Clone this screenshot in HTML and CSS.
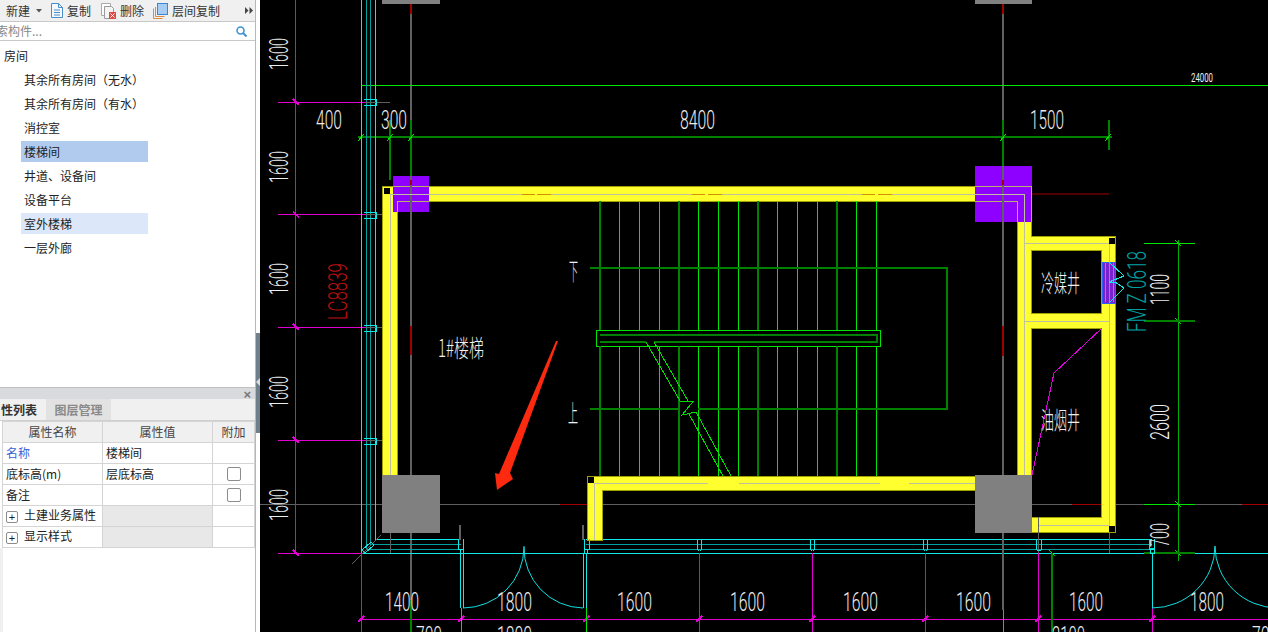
FILE: index.html
```html
<!DOCTYPE html>
<html lang="zh">
<head>
<meta charset="utf-8">
<title>房间</title>
<link rel="stylesheet" href="styles.css">
</head>
<body>
<div class="app">
  <aside class="sidebar">
    <div class="toolbar">
      <span class="tool new">新建</span>
      <svg class="caret" width="6" height="4" viewBox="0 0 6 4"><path d="M0 0h6L3 3.500z" fill="#555"/></svg>
      <span class="tool">
        <svg width="12" height="15" viewBox="0 0 12 15"><path d="M.5.500h7l4 4v10H.500z" fill="#f4f9fe" stroke="#4a8cc8"/><path d="M7.500.500v4h4M3 7h6M3 9.500h6M3 12h6" fill="none" stroke="#4a8cc8"/></svg>
        复制
      </span>
      <span class="tool">
        <svg width="16" height="16" viewBox="0 0 16 16"><path d="M.5.500h9v12H.500z" fill="#fff" stroke="#aaa"/><path d="M3.500 3.500h7l2 2v10h-9z" fill="#f4f4f4" stroke="#999"/><rect x="8" y="9" width="7" height="7" fill="#e04a40"/><path d="M9.500 10.500l4 4M13.500 10.500l-4 4" stroke="#fff"/></svg>
        删除
      </span>
      <span class="tool">
        <svg width="15" height="16" viewBox="0 0 15 16"><path d="M.5 5.500v10h9" fill="none" stroke="#e08a40"/><path d="M2.500 4v9.500h9" fill="none" stroke="#e08a40"/><rect x="4.500" y=".5" width="10" height="11" fill="#a8cdf5" stroke="#3f86d0"/></svg>
        层间复制
      </span>
      <svg class="more" width="8" height="7" viewBox="0 0 8 7"><path d="M0 0l3.500 3.500L0 7zM4.500 0L8 3.500 4.500 7z" fill="#444"/></svg>
    </div>
    <div class="search">
      <span class="search-text">索构件...</span>
      <svg width="11" height="11" viewBox="0 0 11 11"><circle cx="4.500" cy="4.500" r="3.500" fill="none" stroke="#3f93d2" stroke-width="1.600"/><path d="M7 7l3.500 3.500" stroke="#3f93d2" stroke-width="2"/></svg>
    </div>
    <ul class="tree">
      <li class="root">房间</li>
      <li>其余所有房间（无水）</li>
      <li>其余所有房间（有水）</li>
      <li>消控室</li>
      <li class="selected">楼梯间</li>
      <li>井道、设备间</li>
      <li>设备平台</li>
      <li class="hover">室外楼梯</li>
      <li>一层外廊</li>
    </ul>
    <section class="props">
      <div class="props-head"><span class="close">×</span></div>
      <div class="tabs">
        <span class="tab active">性列表</span>
        <span class="tab">图层管理</span>
      </div>
      <table class="grid">
        <colgroup><col class="c1"><col class="c2"><col class="c3"></colgroup>
        <tr><th>属性名称</th><th>属性值</th><th>附加</th></tr>
        <tr><td class="link">名称</td><td>楼梯间</td><td></td></tr>
        <tr><td>底标高(m)</td><td>层底标高</td><td class="chk"><span class="box"></span></td></tr>
        <tr><td>备注</td><td></td><td class="chk"><span class="box"></span></td></tr>
        <tr><td><span class="plus">+</span>土建业务属性</td><td class="off"></td><td></td></tr>
        <tr><td><span class="plus">+</span>显示样式</td><td class="off"></td><td></td></tr>
      </table>
      <div class="strip"></div>
    </section>
  </aside>
  <div class="splitter"><span class="handle"></span></div>
  <svg class="cad" viewBox="260 0 1008 632" width="1008" height="632">
    <!-- axis lines -->
    <path class="axis" d="M411 4V600M1003 4V610M260 504.500H1268"/>
    <path class="axisred" d="M411 4V14M411 326V355M1003 4V14M1003 326V356M560 504.500H590M1072 504.500H1102M1242 504.500H1268"/>
    <path class="wine" d="M1032 194H1109"/>
    <rect class="pillar" x="382" y="-2" width="58" height="6"/>
    <rect class="pillar" x="975" y="-2" width="57" height="6"/>

    <!-- top dimensions -->
    <path class="bright" d="M361 85.500H1268M361.500 78V440"/>
    <path class="dark" d="M358 137H1112M390 120V180M411 120V178M1003 120V166M1109 120V150"/>
    <path class="mid" d="M1178 240V561"/>
    <path class="bright" d="M358 141l6-7M387 141l6-7M408 141l6-7M1000 141l6-7M1105 141l6-7"/>

    <!-- magenta left axis -->
    <path class="mag" d="M295.500 0V553M278 102.500H365M278 214.500H365M278 327.500H365M278 440.500H365M278 553.500H361"/>
    <path class="mag" d="M293 99l6 6M293 211.500l6 6M293 324l6 6M293 437l6 6M293 550l6 6"/>

    <!-- curtain wall left -->
    <path class="cyan" d="M361.500 0V553.500H1268M375.500 0V539.500H461M586 539.500H1152"/>
    <path class="teal" d="M366.500 0V549.500H461M370.500 0V544.500H461M586 544.500H1152M586 549.500H1152"/>
    <path class="axis thin" d="M352 564L381 535M365 102.500H390M365 214.500H390M365 327.500H390M365 440.500H390M390.500 533V553"/>
    <path class="cyan" d="M364 99.500h12v6h-12M364 212.500h12v6h-12M364 325.500h12v6h-12M364 438.500h12v6h-12"/>
    <path class="cyan" d="M362 550l9-8 3 3-9 8z"/>

    <!-- walls -->
    <path class="wall" d="M382.500 186.500H1031.500V236.500H1115.500V532.500H1031.500V517.500H1101.500V328.500H1031.500V475H1017.500V201.500H397.500V476H382.500Z"/>
    <path class="room" d="M1031.500 250.500H1101.500V313.500H1031.500Z"/>
    <path class="wall" d="M587.500 476.500H975V490.500H602.500V540H587.500Z"/>

    <!-- columns on top of walls -->
    <rect class="purple" x="393" y="176" width="36" height="36"/>
    <rect class="purple" x="975" y="166" width="57" height="56"/>
    <path class="tan" d="M393 186.500H429M397.500 212V201.500H429M975 186.500H1032M975 201.500H1017.500V222M1031.500 186.500V222"/>
    <path class="axis" d="M411 176V212M1003 166V222"/>
    <path class="axisred" d="M411 180V185M1003 180V185"/>

    <!-- wall centre lines -->
    <path class="core" d="M390.500 194V476M390.500 194.500H522M551 194.500H692M722 194.500H862M892 194.500H1024.500V475M1024.500 243.500H1109.500V262M1109.500 303V525M1024.500 321.500H1109.500M1039 525.500H1109.500M594 483.500H708M739 483.500H880M909 483.500H975M594.500 483V540"/>
    <path class="dashorange" d="M522 194.500H535M537 194.500H551M692 194.500H705M708 194.500H722M862 194.500H875M878 194.500H892"/>
    <rect class="hole" x="384" y="188" width="6" height="6"/>
    <rect class="hole" x="588" y="477" width="6" height="6"/>
    <rect class="hole" x="1109" y="238" width="6" height="6"/>
    <rect class="hole" x="1109" y="526" width="6" height="6"/>

    <!-- door in shaft -->
    <rect class="shaft" x="1102.500" y="262" width="13" height="41"/>
    <path class="shaftline" d="M1105.500 263V302M1109.500 263V302M1113.500 263V302"/>
    <path class="cyan" d="M1109 262L1124 276 1109 282H1115L1124 288 1109 303"/>

    <!-- pillars at the bottom -->
    <rect class="pillar" x="382" y="475" width="58" height="58"/>
    <rect class="pillar" x="975" y="475" width="57" height="58"/>
    <path class="axis" d="M1003 533V610M1038.500 517V553M1109.500 533V553M460 525V540M583 525V540"/>

    <!-- stairs -->
    <path class="bright" d="M619.500 201V330M639.500 201V330M659.500 201V330M698.500 201V330M718.500 201V330M738.500 201V330M777.500 201V330M797.500 201V330M817.500 201V330M856.500 201V330M876.500 201V330M619.500 346V476M639.500 346V476M659.500 346V476M698.500 346V476M718.500 346V476M738.500 346V476M777.500 346V476M797.500 346V476M817.500 346V476M856.500 346V476M876.500 346V476M596.500 330.500H880.500V346.500H596.500Z"/>
    <path class="dark" d="M600 201V330M679 201V330M758 201V330M837 201V330M600 346V476M679 346V476M758 346V476M837 346V476M590 268H947V409H698M680 409H590M600 335H876.500V342H654M646 342H600Z"/>
    <rect class="mask" x="647" y="343" width="6" height="3"/>
    <path class="bright thin" d="M646 342L680 401 693.500 401 682 415 696 412 731 476M654 342L688 401M689 414L723 476"/>
    <path class="magthin" d="M1102 328L1054 373 1032 475"/>

    <!-- green right dimension -->
    <path class="bright" d="M1144 243.500H1195M1144 504.500H1195M1175 240l6 6M1175 318l6 6M1175 501l6 6M1175 550l6 6"/>
    <path class="dark" d="M1144 321H1195M1144 553H1195"/>

    <!-- mullions -->
    <path class="mag" d="M361.500 553V632M699.500 553V632M812.500 553V632M925.500 553V632M1038.500 553V632M1152.500 608V632M361 619.500H1268"/>
    <path class="mag" d="M358 622l6-6M458 622l6-6M583 622l6-6M696 622l6-6M809 622l6-6M922 622l6-6M1035 622l6-6M1149 622l6-6"/>
    <path class="cyan" d="M458.500 539V549.500H463.500V539M460.500 549v4h3v-4M584.500 539V549.500H589.500V539M584.500 549v4h3v-4M697.500 539V548C697.500 552 701.500 552 701.500 548V539M810.500 539V548C810.500 552 814.500 552 814.500 548V539M923.500 539V548C923.500 552 927.500 552 927.500 548V539M1036.500 539V548C1036.500 552 1041.500 552 1041.500 548V539M1149.500 539V549H1154.500V539M1150.500 548h4v5h-4z"/>

    <!-- doors -->
    <path class="cyan" d="M460.500 553V608M463.500 553V608M583.500 553V608M586.500 553V608M1152.500 553V608"/>
    <path class="cyanthin" d="M463 608A61 61 0 0 0 524 547V546M583 608A60 60 0 0 1 524 547M1152 608A63 62 0 0 0 1215 546M1278 608A63 62 0 0 1 1215 546"/>

    <path class="bright" d="M1049 550l6 6"/>
    <path class="dark" d="M1052 553V632M411 600V632"/>
    <path class="bright" d="M461.500 608V632M586.500 608V632M1003.500 610V632"/>

    <!-- arrow -->
    <polygon class="arrow" points="558,341 510,473 513,479 497,490 495,473 499,474 556,341"/>

    <!-- text -->
    <text class="t" x="316" y="129" textLength="26" lengthAdjust="spacingAndGlyphs">400</text>
    <text class="t" x="381" y="129" textLength="26" lengthAdjust="spacingAndGlyphs">300</text>
    <text class="t" x="680" y="129" textLength="35" lengthAdjust="spacingAndGlyphs">8400</text>
    <text class="t" x="1030" y="129" textLength="34" lengthAdjust="spacingAndGlyphs">1500</text>
    <text class="t small" x="1191" y="82" textLength="22" lengthAdjust="spacingAndGlyphs">24000</text>

    <text class="t" transform="translate(288 70) rotate(-90)" textLength="32" lengthAdjust="spacingAndGlyphs">1600</text>
    <text class="t" transform="translate(288 183) rotate(-90)" textLength="32" lengthAdjust="spacingAndGlyphs">1600</text>
    <text class="t" transform="translate(288 295) rotate(-90)" textLength="32" lengthAdjust="spacingAndGlyphs">1600</text>
    <text class="t" transform="translate(288 408) rotate(-90)" textLength="32" lengthAdjust="spacingAndGlyphs">1600</text>
    <text class="t" transform="translate(288 521) rotate(-90)" textLength="32" lengthAdjust="spacingAndGlyphs">1600</text>
    <text class="t red" transform="translate(347 320) rotate(-90)" textLength="57" lengthAdjust="spacingAndGlyphs">LC8839</text>

    <text class="t tealtext" transform="translate(1146 332) rotate(-90)" textLength="81" lengthAdjust="spacingAndGlyphs">FM Z 0618</text>
    <text class="t" transform="translate(1169 305) rotate(-90)" textLength="31" lengthAdjust="spacingAndGlyphs">1100</text>
    <text class="t" transform="translate(1169 440) rotate(-90)" textLength="36" lengthAdjust="spacingAndGlyphs">2600</text>
    <text class="t" transform="translate(1169 547) rotate(-90)" textLength="24" lengthAdjust="spacingAndGlyphs">700</text>

    <text class="t" x="385" y="611" textLength="34" lengthAdjust="spacingAndGlyphs">1400</text>
    <text class="t" x="497" y="611" textLength="35" lengthAdjust="spacingAndGlyphs">1800</text>
    <text class="t" x="617" y="611" textLength="35" lengthAdjust="spacingAndGlyphs">1600</text>
    <text class="t" x="730" y="611" textLength="35" lengthAdjust="spacingAndGlyphs">1600</text>
    <text class="t" x="843" y="611" textLength="35" lengthAdjust="spacingAndGlyphs">1600</text>
    <text class="t" x="956" y="611" textLength="35" lengthAdjust="spacingAndGlyphs">1600</text>
    <text class="t" x="1069" y="611" textLength="34" lengthAdjust="spacingAndGlyphs">1600</text>
    <text class="t" x="1190" y="611" textLength="34" lengthAdjust="spacingAndGlyphs">1800</text>
    <text class="t" x="416" y="645" textLength="26" lengthAdjust="spacingAndGlyphs">700</text>
    <text class="t" x="497" y="645" textLength="35" lengthAdjust="spacingAndGlyphs">1800</text>
    <text class="t" x="1052" y="645" textLength="33" lengthAdjust="spacingAndGlyphs">2100</text>
    <text class="t" x="1252" y="645" textLength="26" lengthAdjust="spacingAndGlyphs">700</text>

    <text class="t zh" x="1041" y="292" textLength="39" lengthAdjust="spacingAndGlyphs">冷媒井</text>
    <text class="t zh" x="1041" y="429" textLength="39" lengthAdjust="spacingAndGlyphs">油烟井</text>
    <text class="t zh" x="438" y="357" textLength="46" lengthAdjust="spacingAndGlyphs">1#楼梯</text>
    <text class="t zh" x="569" y="280" textLength="9" lengthAdjust="spacingAndGlyphs">下</text>
    <text class="t zh" x="568" y="422" textLength="10" lengthAdjust="spacingAndGlyphs">上</text>
  </svg>
</div>
</body>
</html>
```
FILE: styles.css
```css
* { box-sizing: border-box; }
html, body { margin: 0; height: 100%; overflow: hidden; background: #fff; }
body { font: 12px/1 "Noto Sans CJK SC", "Liberation Sans", sans-serif; color: #222; }
.app { display: flex; width: 1268px; height: 632px; }

.sidebar { width: 256px; flex: none; display: flex; flex-direction: column; border-right: 1px solid #b5b8bb; overflow: hidden; background: #fff; }
.toolbar { height: 22px; display: flex; align-items: center; background: #f0f0f0; padding-left: 6px; border-bottom: 1px solid #c8c8c8; flex: none; }
.tool { display: inline-flex; align-items: center; gap: 4px; margin-right: 10px; color: #333; }
.tool.new { margin-right: 6px; }
.caret { margin-right: 9px; }
.toolbar .tool:nth-of-type(3) { gap: 3px; margin-right: 9px; }
.toolbar .tool:nth-of-type(4) { gap: 4px; }
.more { margin-left: 15px; }

.search { height: 19px; display: flex; align-items: center; justify-content: space-between; padding-right: 8px; border-bottom: 1px solid #c8c8c8; flex: none; }
.search-text { margin-left: -4px; color: #888; }

.tree { list-style: none; margin: 0; padding: 4px 0 0; flex: 1; }
.tree li { height: 21px; margin: 0 107px 3px 21px; padding-left: 3px; line-height: 21px; white-space: nowrap; }
.tree .root { margin-left: 0; padding-left: 4px; }
.tree .selected { background: #b0cbee; }
.tree .hover { background: #dce8fa; }

.props { flex: none; height: 245px; border-top: 1px solid #c0c0c0; display: flex; flex-direction: column; }
.props-head { height: 11px; background: #d8dadd; text-align: right; padding-right: 4px; flex: none; }
.close { font: bold 13px/11px "Liberation Sans", sans-serif; color: #777; }
.tabs { height: 22px; display: flex; background: #f0f0f0; border-bottom: 1px solid #d0d0d0; flex: none; }
.tab { height: 21px; width: 65px; line-height: 21px; text-align: center; font-weight: 700; color: #8a8a8a; background: #e2e2e2; }
.tab.active { width: 46px; color: #333; background: #f0f0f0; text-align: right; padding-right: 9px; }

.grid { border-collapse: collapse; table-layout: fixed; width: 252px; margin-left: 2px; flex: none; }
.c1 { width: 100px; }
.c2 { width: 110px; }
.c3 { width: 42px; }
.grid th, .grid td { height: 21px; border: 1px solid #d4d4d4; padding: 0 0 0 3px; font-weight: 400; text-align: left; white-space: nowrap; overflow: hidden; }
.grid th { background: #f0f0f0; text-align: center; padding: 0; color: #444; }
.grid .link { color: #3a5fd8; }
.grid .off { background: #e8e8e8; }
.grid .chk { text-align: center; padding: 0; }
.box { display: inline-block; width: 14px; height: 14px; border: 1px solid #8c8c8c; border-radius: 2px; background: #fff; vertical-align: middle; }
.plus { display: inline-block; width: 12px; height: 12px; margin: 0 6px 0 0; border: 1px solid #8c8c8c; border-radius: 2px; font: 11px/10px "Liberation Sans", sans-serif; text-align: center; vertical-align: -1px; }
.strip { flex: 1; width: 3px; background: #f0f0f0; }

.splitter { width: 4px; flex: none; display: flex; align-items: center; background: #fff; }
.handle { display: block; position: relative; width: 4px; height: 100px; margin-top: 134px; background: #6f7f8b; }
.handle::after { content: ""; position: absolute; left: 0; top: 45px; border: 4px solid transparent; border-left: 0; border-right-color: #d8dde0; }

.cad { flex: none; display: block; background: #000; shape-rendering: crispEdges; }
.cad path { fill: none; }
.axis { stroke: #606060; stroke-width: 1.500; }
.axis.thin { stroke-width: 1; }
.axisred { stroke: #a00000; stroke-width: 1.500; }
.wine { stroke: #500000; stroke-width: 1.500; }
.bright { stroke: #00e600; stroke-width: 1; }
.bright.thin { stroke: #00e000; stroke-width: 1; }
.mid { stroke: #00b000; stroke-width: 1; }
.dark { stroke: #008200; stroke-width: 2; }
.mag { stroke: #e000d0; stroke-width: 1.500; }
.magthin { stroke: #e000e0; stroke-width: 1; }
.cyan { stroke: #10e8e8; stroke-width: 1; }
.cyanthin { stroke: #10e0e0; stroke-width: 1; shape-rendering: auto; }
.teal { stroke: #00a0a0; stroke-width: 1; }
.pillar { fill: #808080; }
.purple { fill: #8e00ff; }
.cad .wall { fill: #ffff30; stroke: #a0a000; stroke-width: 1; }
.cad .room { fill: #000; stroke: #a0a000; stroke-width: 1; }
.tan { stroke: #b8b070; stroke-width: 1; }
.core { stroke: #c0c0a0; stroke-width: 1; }
.dashorange { stroke: #d09000; stroke-width: 1; }
.hole { fill: #000; }
.mask { fill: #000; }
.shaft { fill: #7a22d0; stroke: #3060f0; stroke-width: 1; }
.shaftline { stroke: #c060ff; stroke-width: 1; }
.arrow { fill: #fe2a10; shape-rendering: auto; }
.t { font-family: Roboto, "Liberation Sans", sans-serif; font-size: 25px; font-weight: 300; fill: #eeeeee; shape-rendering: auto; }
.t.small { font-size: 13px; font-weight: 400; }
.t.red { fill: #b81010; }
.t.tealtext { fill: #00a0a0; }
.t.zh { font-family: "Noto Sans CJK SC", sans-serif; font-size: 24px; font-weight: 300; fill: #f0f0f0; }
```
